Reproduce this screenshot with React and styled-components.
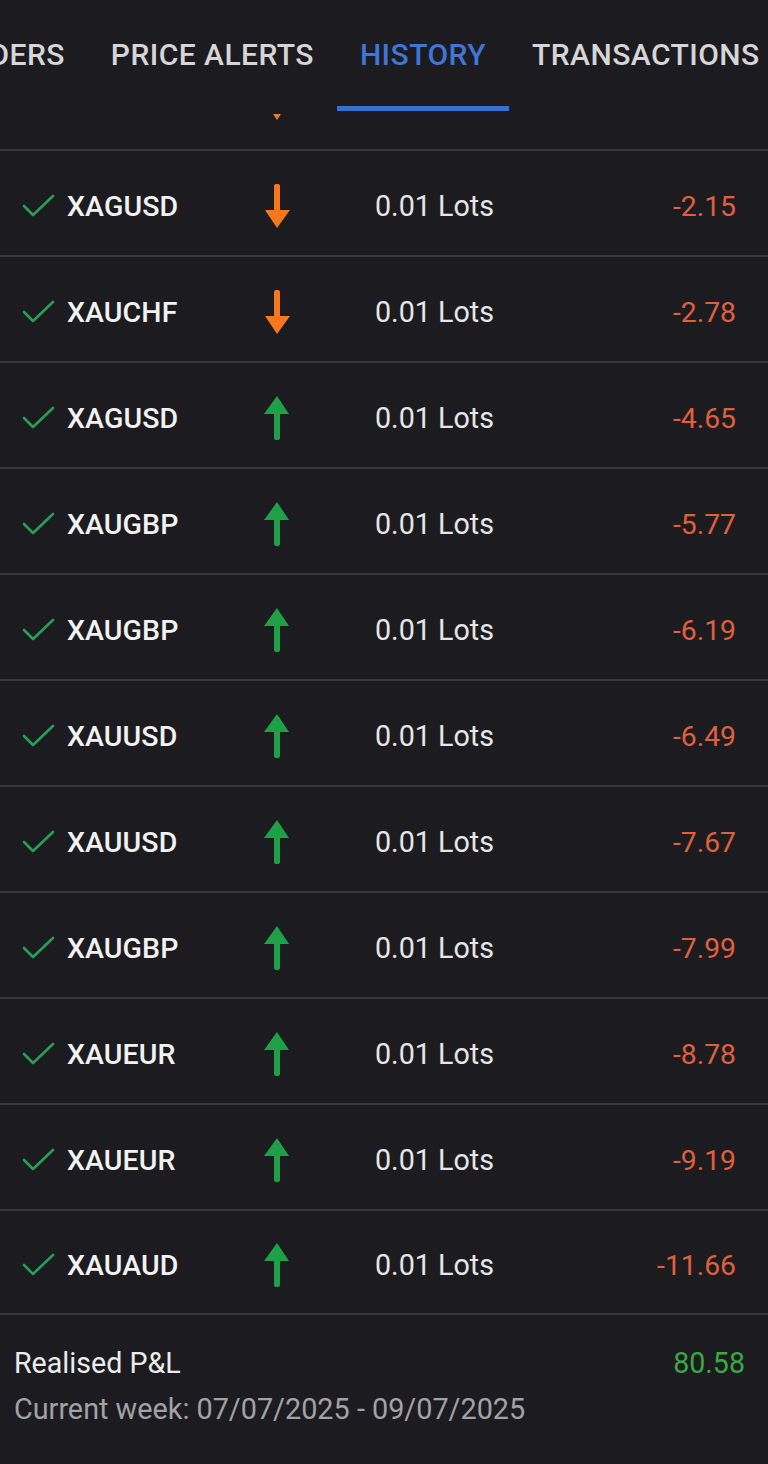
import React from "react"
import styled, { createGlobalStyle } from "styled-components"

const GlobalStyle = createGlobalStyle`
    html, body {
        margin: 0;
        padding: 0;
        background: #1c1c20;
    }
    body {
        font-family: Roboto, "Liberation Sans", sans-serif;
        color: #ececec;
        overflow: hidden;
    }
`

const Page = styled.div`
    width: 768px;
    height: 1464px;
    background: #1c1c20;
    overflow: hidden;
`

const TabBar = styled.div`
    display: flex;
    height: 111px;
    margin-left: -74px;
    white-space: nowrap;
`

const Tab = styled.div`
    flex: none;
    box-sizing: border-box;
    height: 111px;
    padding: 37px 23px 0;
    font-size: 30px;
    font-weight: 500;
    letter-spacing: 0.45px;
    line-height: 36px;
    color: ${(props) => (props.active ? "#3f76d6" : "#d6d6d8")};
    border-bottom: 5px solid ${(props) => (props.active ? "#3a6fd0" : "transparent")};
`

const MarkerRow = styled.div`
    height: 38px;
    padding-left: 273px;
    box-sizing: border-box;
    padding-top: 3px;
`

const Marker = styled.div`
    width: 0;
    height: 0;
    border-left: 4px solid transparent;
    border-right: 4px solid transparent;
    border-top: 6px solid #f07a22;
`

const List = styled.div`
    display: flex;
    flex-direction: column;
`

const Row = styled.div`
    display: grid;
    grid-template-columns: 45px 164px 92px 1fr auto;
    align-items: center;
    box-sizing: border-box;
    height: 106px;
    padding: 6px 32px 0 22px;
    border-top: 2px solid #38383d;
    &:last-child {
        border-bottom: 2px solid #38383d;
        height: 106px;
    }
`

const CheckCell = styled.div`
    display: flex;
    align-items: center;
`

const Symbol = styled.div`
    font-size: 28.5px;
    font-weight: 500;
    color: #f2f2f2;
    letter-spacing: 0.1px;
`

const ArrowCell = styled.div`
    display: flex;
    justify-content: center;
`

const Lots = styled.div`
    margin-left: 52px;
    font-size: 28.7px;
    color: #e6e6e6;
`

const Value = styled.div`
    font-size: 28.3px;
    color: #e0603d;
    text-align: right;
`

const Footer = styled.div`
    padding: 30px 23px 0 14px;
`

const FooterLine = styled.div`
    display: flex;
    justify-content: space-between;
    align-items: center;
    height: 36px;
`

const FooterLabel = styled.div`
    font-size: 28.6px;
    color: #ececec;
`

const Total = styled.div`
    font-size: 28.6px;
    color: #3aa845;
`

const Week = styled.div`
    margin-top: 11px;
    font-size: 28.8px;
    color: #a2a2a6;
`

function CheckIcon() {
    return (
        <svg width="34" height="24" viewBox="0 0 34 24">
            <polyline
                points="2,12 11,21 31,2"
                fill="none"
                stroke="#25a055"
                strokeWidth="2.6"
                strokeLinecap="round"
                strokeLinejoin="round"
            />
        </svg>
    )
}

function Arrow({ up }) {
    const color = up ? "#1e9f48" : "#f5781e"
    return (
        <svg width="28" height="46" viewBox="0 0 28 46" style={{ transform: up ? "none" : "rotate(180deg)" }}>
            <polygon points="14,1 26,19 1,19" fill={color} />
            <rect x="11" y="17" width="6" height="28" rx="2" fill={color} />
        </svg>
    )
}

const trades = [
    { sym: "XAGUSD", up: false, pnl: "-2.15" },
    { sym: "XAUCHF", up: false, pnl: "-2.78" },
    { sym: "XAGUSD", up: true, pnl: "-4.65" },
    { sym: "XAUGBP", up: true, pnl: "-5.77" },
    { sym: "XAUGBP", up: true, pnl: "-6.19" },
    { sym: "XAUUSD", up: true, pnl: "-6.49" },
    { sym: "XAUUSD", up: true, pnl: "-7.67" },
    { sym: "XAUGBP", up: true, pnl: "-7.99" },
    { sym: "XAUEUR", up: true, pnl: "-8.78" },
    { sym: "XAUEUR", up: true, pnl: "-9.19" },
    { sym: "XAUAUD", up: true, pnl: "-11.66" },
]

const tabs = ["ORDERS", "PRICE ALERTS", "HISTORY", "TRANSACTIONS"]

export default function App() {
    return (
        <Page>
            <GlobalStyle />
            <TabBar>
                {tabs.map((t) => (
                    <Tab key={t} active={t === "HISTORY"}>
                        {t}
                    </Tab>
                ))}
            </TabBar>
            <MarkerRow>
                <Marker />
            </MarkerRow>
            <List>
                {trades.map((t, i) => (
                    <Row key={i}>
                        <CheckCell>
                            <CheckIcon />
                        </CheckCell>
                        <Symbol>{t.sym}</Symbol>
                        <ArrowCell>
                            <Arrow up={t.up} />
                        </ArrowCell>
                        <Lots>0.01 Lots</Lots>
                        <Value>{t.pnl}</Value>
                    </Row>
                ))}
            </List>
            <Footer>
                <FooterLine>
                    <FooterLabel>Realised P&amp;L</FooterLabel>
                    <Total>80.58</Total>
                </FooterLine>
                <Week>Current week: 07/07/2025 - 09/07/2025</Week>
            </Footer>
        </Page>
    )
}
